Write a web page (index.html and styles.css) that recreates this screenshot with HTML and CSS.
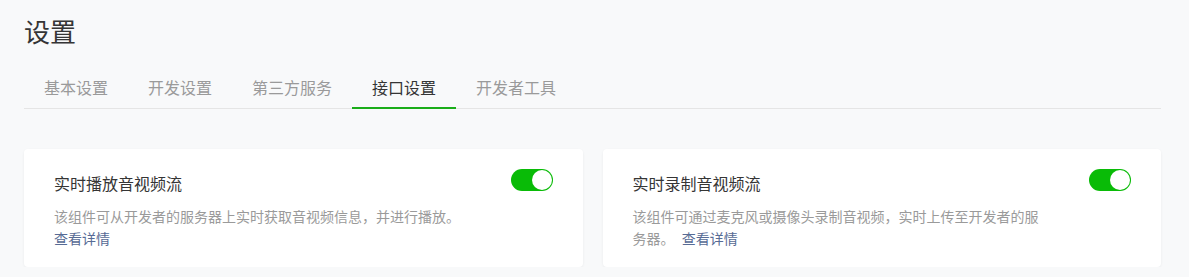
FILE: index.html
```html
<!DOCTYPE html>
<html lang="zh-CN">
<head>
  <meta charset="UTF-8">
  <title>设置</title>
  <link rel="stylesheet" href="styles.css">
</head>
<body>
  <div class="page">
    <!-- 标题 -->
    <h1 class="page-title">设置</h1>
    <!-- 标签栏 -->
    <div class="tabs">
      <a class="tab" href="#">基本设置</a>
      <a class="tab" href="#">开发设置</a>
      <a class="tab" href="#">第三方服务</a>
      <a class="tab tab-active" href="#">接口设置</a>
      <a class="tab" href="#">开发者工具</a>
    </div>
    <!-- 接口列表 -->
    <div class="card-list">
      <div class="card">
        <div class="card-head">
          <div class="card-title">实时播放音视频流</div>
          <span class="switch switch-on"></span>
        </div>
        <div class="card-desc">该组件可从开发者的服务器上实时获取音视频信息，并进行播放。 <a class="card-link" href="#">查看详情</a></div>
      </div>
      <div class="card">
        <div class="card-head">
          <div class="card-title">实时录制音视频流</div>
          <span class="switch switch-on"></span>
        </div>
        <div class="card-desc">该组件可通过麦克风或摄像头录制音视频，实时上传至开发者的服务器。 <a class="card-link" href="#">查看详情</a></div>
      </div>
    </div>
  </div>
</body>
</html>
```

FILE: styles.css
```css
body {
  margin: 0;
  background: #f8f9fa;
  font-family: "Noto Sans CJK SC", "Noto Sans", sans-serif;
  color: #353535;
}
.page {
  padding: 14px 28px 0 24px;
}
.page-title {
  margin: 0;
  font-size: 26px;
  font-weight: normal;
  line-height: 34px;
}
.tabs {
  display: flex;
  margin-top: 19px;
  border-bottom: 1px solid #e5e5e5;
}
.tab {
  display: block;
  padding: 0 20px;
  line-height: 40px;
  font-size: 16px;
  color: #9a9a9a;
  text-decoration: none;
  border-bottom: 2px solid transparent;
  margin-bottom: -1px;
}
.tab-active {
  color: #353535;
  border-bottom-color: #1aad19;
}
.card-list {
  display: flex;
  gap: 20px;
  margin-top: 40px;
}
.card {
  flex: 1;
  background: #fff;
  border-radius: 4px;
  box-shadow: 0 1px 3px rgba(0, 0, 0, 0.06);
  padding: 20px 30px 18px 30px;
}
.card-head {
  display: flex;
  justify-content: space-between;
  align-items: flex-start;
}
.card-title {
  font-size: 16px;
  line-height: 28px;
}
.switch {
  position: relative;
  display: block;
  width: 42px;
  height: 22px;
  border-radius: 11px;
  background: #09bb07;
}
.switch-on::after {
  content: "";
  position: absolute;
  top: 1px;
  right: 1px;
  width: 20px;
  height: 20px;
  border-radius: 50%;
  background: #fff;
}
.card-desc {
  margin-top: 8px;
  max-width: 412px;
  font-size: 14px;
  line-height: 22px;
  color: #9a9a9a;
  word-spacing: 4px;
}
.card-link {
  color: #576b95;
  text-decoration: none;
}
```
